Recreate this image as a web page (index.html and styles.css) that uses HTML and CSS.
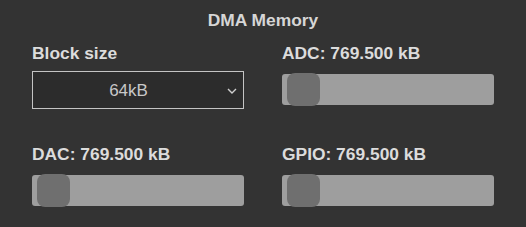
FILE: index.html
```html
<!DOCTYPE html>
<html lang="en">
  <head>
    <meta charset="UTF-8" />
    <meta name="viewport" content="width=device-width, initial-scale=1.0" />
    <title>DMA Memory</title>
    <link rel="stylesheet" href="styles.css">
  </head>
  <body>
    <div class="panel">
      <h2 class="title">DMA Memory</h2>

      <div class="grid">
        <!-- Block size picker -->
        <div class="cell">
          <label class="label" for="block">Block size</label>
          <div class="select-wrap">
            <select id="block" class="select">
              <option>16kB</option>
              <option>32kB</option>
              <option selected>64kB</option>
              <option>128kB</option>
            </select>
            <svg class="chevron" width="10" height="6" viewBox="0 0 10 6">
              <path d="M1 1 L5 5 L9 1" fill="none" stroke="#cfcfcf" stroke-width="1.4" />
            </svg>
          </div>
        </div>

        <div class="cell">
          <label class="label" for="adc">ADC: 769.500 kB</label>
          <input id="adc" class="slider" type="range" min="0" max="100" value="0" />
        </div>

        <div class="cell">
          <label class="label" for="dac">DAC: 769.500 kB</label>
          <input id="dac" class="slider" type="range" min="0" max="100" value="0" />
        </div>

        <div class="cell">
          <label class="label" for="gpio">GPIO: 769.500 kB</label>
          <input id="gpio" class="slider" type="range" min="0" max="100" value="0" />
        </div>
      </div>
    </div>
  </body>
</html>
```

FILE: styles.css
```css
body {
  margin: 0;
  padding: 0;
  background-color: #333333;
  font-family: "Liberation Sans", Arial, sans-serif;
  color: #dddddd;
}

.panel {
  padding: 10px 32px;
}

.title {
  margin: 0 0 13px 0;
  font-size: 17.4px;
  line-height: 20px;
  font-weight: bold;
  text-align: center;
  color: #d6d6d6;
}

/* two columns of controls */
.grid {
  display: grid;
  grid-template-columns: 1fr 1fr;
  column-gap: 38px;
  row-gap: 35px;
}

.cell {
  display: flex;
  flex-direction: column;
}

.label {
  font-size: 17.4px;
  line-height: 20px;
  font-weight: bold;
  color: #dcdcdc;
  margin-bottom: 8px;
}

/* Select box */
.select-wrap {
  position: relative;
  height: 38px;
}

.select {
  -webkit-appearance: none;
  appearance: none;
  width: 100%;
  height: 38px;
  margin: 0;
  padding: 0 19px 0 0;
  background-color: #2c2c2c;
  border: 1px solid #c4c4c4;
  border-radius: 0;
  color: #c8c8c8;
  font-family: "Liberation Sans", Arial, sans-serif;
  font-size: 17px;
  text-align: center;
  text-align-last: center;
  outline: none;
}

.chevron {
  position: absolute;
  right: 7px;
  top: 17px;
  pointer-events: none;
}

/* Range sliders */
.slider {
  -webkit-appearance: none;
  appearance: none;
  width: 100%;
  height: 31px;
  margin: 3px 0 4px 0;
  padding: 0 5px;
  box-sizing: border-box;
  background-color: #9e9e9e;
  border-radius: 3px;
  outline: none;
}

.slider::-webkit-slider-runnable-track {
  height: 31px;
  background: transparent;
}

.slider::-webkit-slider-thumb {
  -webkit-appearance: none;
  width: 33px;
  height: 33px;
  margin-top: -1px;
  background-color: #6f6f6f;
  border-radius: 8px;
  cursor: pointer;
}
```
